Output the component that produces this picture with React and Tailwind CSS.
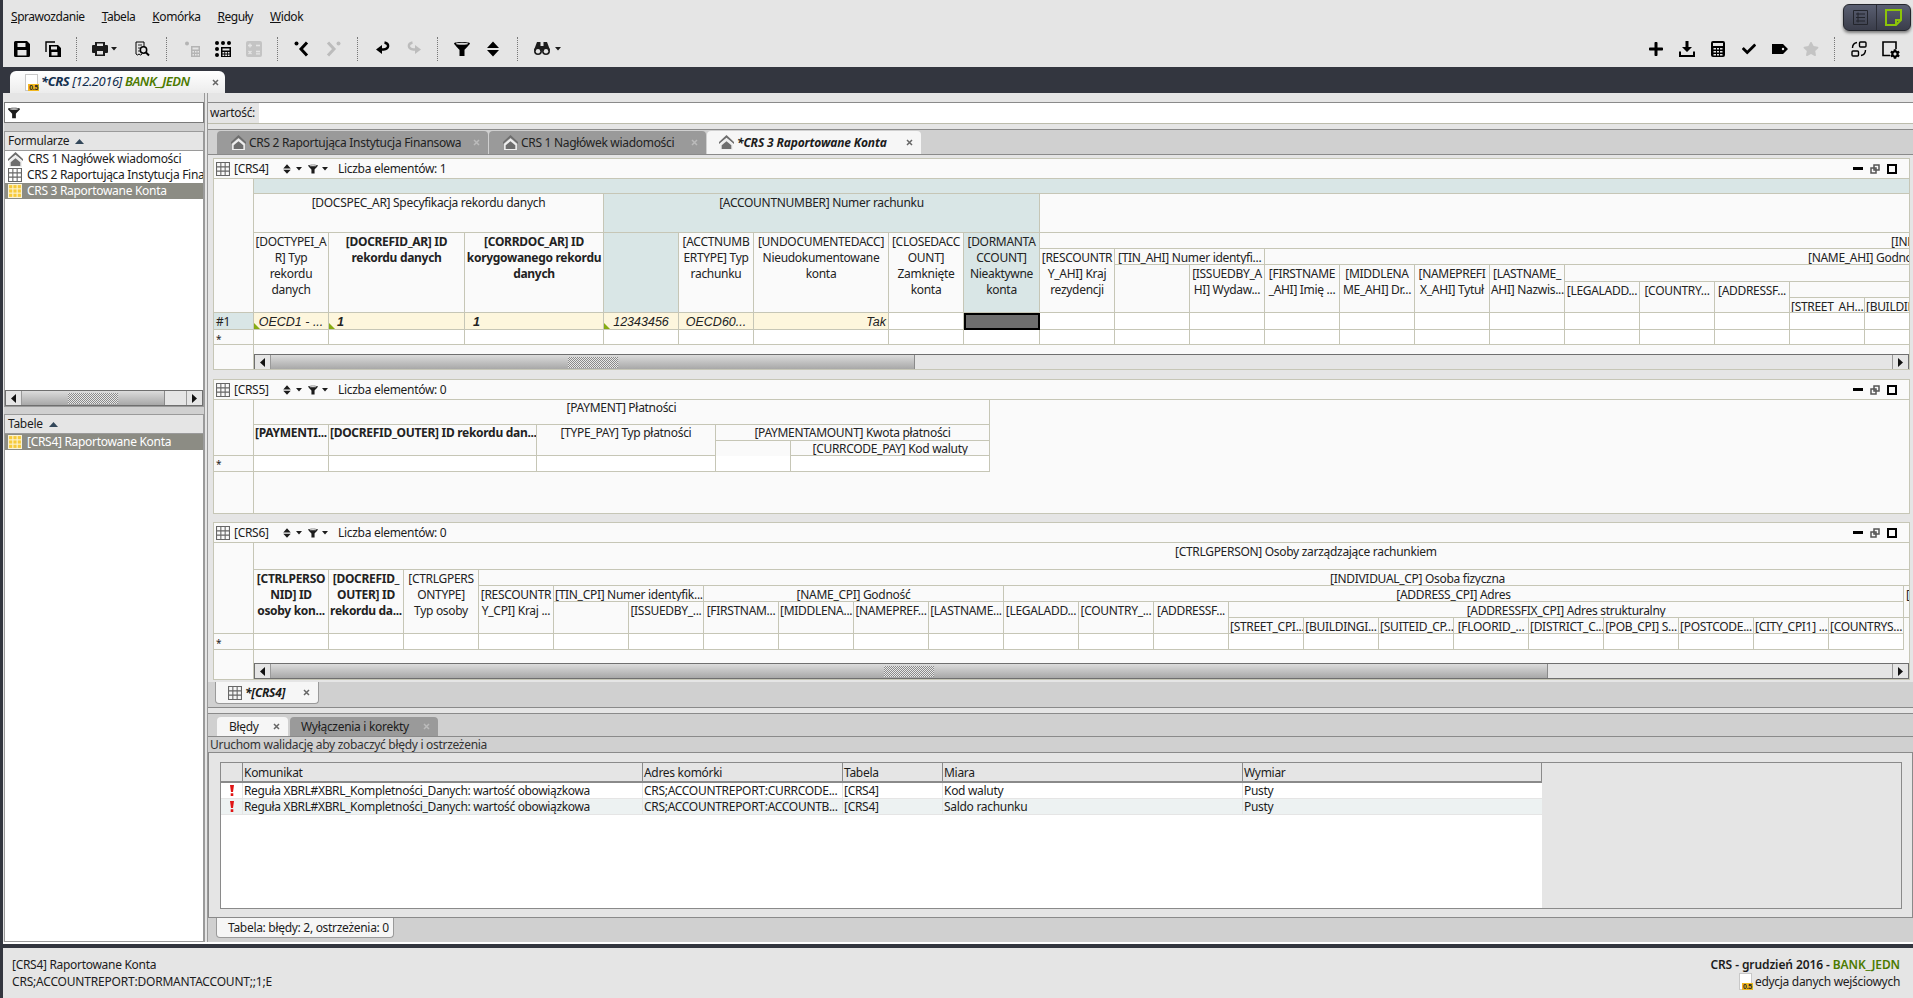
import React from 'react';
import clsx from 'clsx';
import { FaCheck, FaCog, FaPlus, FaStar } from 'react-icons/fa';

const line = 'border-[#c6c6b6]';
const dataFont = "font-['Liberation_Sans',sans-serif] text-[12.5px] tracking-normal italic";

// toolbar drawings
const Save = ({ className }) => (
    <svg viewBox="0 0 16 16" className={clsx('h-4 w-4', className)}>
        <path fill="currentColor" fillRule="evenodd" d="M0 1.5A1.5 1.5 0 0 1 1.5 0H13l3 3v11.5a1.5 1.5 0 0 1-1.5 1.5h-13A1.5 1.5 0 0 1 0 14.5zM3.5 2v4h8V2zM3.5 9v5.500h9V9z" />
    </svg>
);
const SaveAll = () => (
    <svg viewBox="0 0 16 16" className="h-4 w-4">
        <path fill="none" stroke="currentColor" strokeWidth="1.4" d="M10 1H1v10" />
        <path fill="currentColor" fillRule="evenodd" d="M4 4h9l3 3v9H4zM6 5.500v3h6v-3zM6.500 11v3.500h6V11z" />
    </svg>
);
const Print = () => (
    <svg viewBox="0 0 16 16" className="h-4 w-4">
        <path fill="currentColor" fillRule="evenodd" d="M3 1h10v3h2a1 1 0 0 1 1 1v6a1 1 0 0 1-1 1h-2v3H3v-3H1a1 1 0 0 1-1-1V5a1 1 0 0 1 1-1h2zM5 2.500V5h6V2.500zM5 10v3.500h6V10z" />
    </svg>
);
const Preview = () => (
    <svg viewBox="0 0 16 16" className="h-4 w-4" fill="none" stroke="currentColor">
        <path d="M2 1h8v5M2 1v12l1.500 1 1.500-1 1.500 1 1.500-1" />
        <path d="M4 4h4M4 7h2M4 10h2" strokeWidth=".8" />
        <circle cx="9.500" cy="9" r="3.200" strokeWidth="1.500" />
        <path d="m12 11.500 3 3" strokeWidth="2" />
    </svg>
);
const CalcGray = () => (
    <svg viewBox="0 0 16 16" className="h-4 w-4 text-[#b4b4b4]">
        <circle cx="3" cy="2.500" r="2" fill="currentColor" />
        <path fill="currentColor" fillRule="evenodd" d="M7 5h9v11H7zM8.500 6.500v2h6v-2zM8.500 10v1.500h1.500V10zM11 10v1.500h1.500V10zM13.500 10v1.500H15V10zM8.500 13v1.500h1.500V13zM11 13v1.500h1.500V13zM13.500 13v1.500H15V13z" />
    </svg>
);
const CalcDots = () => (
    <svg viewBox="0 0 16 16" className="h-4 w-4">
        <g fill="currentColor">
            <circle cx="2" cy="2" r="2" />
            <circle cx="8" cy="2" r="2" />
            <circle cx="14" cy="2" r="2" />
            <circle cx="2" cy="8" r="2" />
            <circle cx="2" cy="14" r="2" />
            <path fillRule="evenodd" d="M6 6h10v10H6zM7.500 7.500v2h7v-2zM7.500 11v1.500h1.800V11zM10.200 11v1.500H12V11zM12.800 11v1.500h1.700V11zM7.500 13.500V15h1.800v-1.500zM10.200 13.500V15H12v-1.500zM12.800 13.500V15h1.700v-1.500z" />
        </g>
    </svg>
);
const CalcMinus = () => (
    <svg viewBox="0 0 16 16" className="h-4 w-4">
        <rect width="16" height="16" rx="2" fill="#c4c4c4" />
        <path stroke="#e5e5e5" strokeWidth="1.300" d="M2 4.500h4M4 2.500v4M10 4.500h4M2.500 10l3 3M5.500 10l-3 3M10 10.500h4M10 12.800h4" />
    </svg>
);
const Back = ({ className }) => (
    <svg viewBox="0 0 16 16" className={clsx('h-4 w-4', className)}>
        <circle cx="2.500" cy="2.500" r="2" fill="currentColor" />
        <path fill="none" stroke="currentColor" strokeWidth="3" d="M13 1.500 7 8l6 6.500" />
    </svg>
);
const Undo = ({ className }) => (
    <svg viewBox="0 0 16 16" className={clsx('h-4 w-4', className)}>
        <path fill="none" stroke="currentColor" strokeWidth="2.400" d="M9.500 1.500c5 1 5 6.500-1 7H5" />
        <path fill="currentColor" d="M1 8.500 7 4v9z" />
    </svg>
);
const Funnel = ({ className = 'h-4 w-4' }) => (
    <svg viewBox="0 0 16 16" className={className}>
        <path fill="currentColor" d="M0 2.500C0 .500 16 .500 16 2.500c0 1-5.500 6-5.500 6.500v6h-5V9C5.500 8.500 0 3.500 0 2.500z" />
        <ellipse cx="8" cy="2.700" rx="6" ry="1" fill="#d8d8d8" />
    </svg>
);
const UpDown = ({ className = 'h-4 w-4' }) => (
    <svg viewBox="0 0 16 16" className={className}>
        <path fill="currentColor" d="M8 0.500 14 7H2zM2 9h12l-6 6.500z" />
    </svg>
);
const Caret = () => (
    <svg viewBox="0 0 6 4" className="h-1 w-1.5">
        <path fill="currentColor" d="M0 0h6L3 3.500z" />
    </svg>
);
const Binoculars = () => (
    <svg viewBox="0 0 16 13" className="h-[13px] w-4 shrink-0">
        <path fill="currentColor" d="M3 0h3.500v4h3V0H13l3 8H0z" />
        <circle cx="4" cy="9" r="4" fill="currentColor" />
        <circle cx="12" cy="9" r="4" fill="currentColor" />
        <circle cx="4" cy="9.300" r="2.200" fill="#e5e5e5" />
        <circle cx="12" cy="9.300" r="2.200" fill="#e5e5e5" />
    </svg>
);
const Download = () => (
    <svg viewBox="0 0 16 16" className="h-4 w-4">
        <path fill="currentColor" d="M6.500 0h3v6H13L8 11 3 6h3.500z" />
        <path fill="none" stroke="currentColor" strokeWidth="2" d="M1 10.500V15h14v-4.500" />
    </svg>
);
const Calc = () => (
    <svg viewBox="0 0 14 16" className="h-4 w-3.5">
        <path fill="currentColor" fillRule="evenodd" d="M2 0h10a2 2 0 0 1 2 2v12a2 2 0 0 1-2 2H2a2 2 0 0 1-2-2V2a2 2 0 0 1 2-2zM2 2v3h10V2zM2.500 7v1.500h2.500V7zM6 7v1.500h2V7zM9 7v1.500h2.500V7zM2.500 10v1.500h2.500V10zM6 10v1.500h2V10zM9 10v1.500h2.500V10zM2.500 13v1.500h2.500V13zM6 13v1.500h2V13zM9 13v1.500h2.500V13z" />
    </svg>
);
const Tag = () => (
    <svg viewBox="0 0 16 10" className="h-2.5 w-4">
        <path fill="currentColor" fillRule="evenodd" d="M0 0h11l5 5-5 5H0zM11 3.800a1.200 1.200 0 1 0 0 2.400 1.200 1.200 0 0 0 0-2.400z" />
    </svg>
);
const Sync = () => (
    <svg viewBox="0 0 16 16" className="h-4 w-4" fill="none" stroke="currentColor" strokeWidth="1.400">
        <rect x="8.500" y="1" width="6.500" height="5" rx="1" />
        <rect x="1" y="10" width="6.500" height="5" rx="1" />
        <path d="M1.500 7C1.500 4 3 2 6 1.500M14.500 9c0 3-1.500 5-4.500 5.500" />
    </svg>
);
const DocGear = () => (
    <span className="relative block h-4 w-4">
        <svg viewBox="0 0 16 16" className="h-4 w-4" fill="none" stroke="currentColor" strokeWidth="1.600">
            <path d="M8 14.500H1V1h13v7" />
        </svg>
        <FaCog className="absolute -bottom-0.5 -right-0.5 h-2.5 w-2.5" />
    </span>
);

// list / tab icons
const HomeIcon = () => (
    <svg viewBox="0 0 14 14" className="h-[15px] w-[15px] shrink-0">
        <path fill="#6e6e6e" d="M7 0 14 6.500v2L7 2.500 0 8.500v-2z" />
        <path fill="#eeeeee" d="M7 3 13 8.200V14H1V8.200z" />
        <path fill="#6e6e6e" d="M2.500 13V9.500L7 5.800l4.500 3.700V13z" />
    </svg>
);
const GridIcon = () => (
    <svg viewBox="0 0 13 13" className="h-3.5 w-3.5 shrink-0" fill="none" stroke="#666">
        <path d="M.5.500h12v12H.500zM4.500.500v12M8.500.500v12M.500 4.500h12M.500 8.500h12" />
    </svg>
);
const YellowGrid = () => (
    <svg viewBox="0 0 13 13" className="h-3.5 w-3.5 shrink-0" fill="#f7ca3a">
        <rect width="13" height="13" fill="#fbf3d4" />
        <rect x="1" y="1" width="3" height="3" />
        <rect x="5" y="1" width="3" height="3" />
        <rect x="9" y="1" width="3" height="3" />
        <rect x="1" y="5" width="3" height="3" />
        <rect x="5" y="5" width="3" height="3" />
        <rect x="9" y="5" width="3" height="3" />
        <rect x="1" y="9" width="3" height="3" />
        <rect x="5" y="9" width="3" height="3" />
        <rect x="9" y="9" width="3" height="3" />
    </svg>
);
const DocBadge = () => (
    <span className="relative block h-[17px] w-[13px] shrink-0 border border-[#c8c8c8] bg-white">
        <span className="absolute -right-0.5 -bottom-px bg-[#f2b81f] px-px font-['Liberation_Sans',sans-serif] text-[7px] leading-[7px] font-bold text-[#222]">0.5</span>
    </span>
);
const Close = ({ className }) => (
    <svg viewBox="0 0 7 7" className={clsx('h-[7px] w-[7px] shrink-0', className)}>
        <path stroke="currentColor" strokeWidth="1.500" d="m1 1 5 5M6 1 1 6" />
    </svg>
);
const SortUp = () => (
    <svg viewBox="0 0 9 5" className="h-[5px] w-[9px]">
        <path fill="#33475a" d="M4.500 0 9 5H0z" />
    </svg>
);

const Sep = ({ className = 'mx-2' }) => <div className={clsx('h-6 w-px border-l border-dotted border-[#777]', className)} />;

const Tool = ({ children }) => (
    <div className="flex h-6 w-[31px] items-center justify-center text-black">{children}</div>
);

const Toolbar = () => (
    <div className="flex h-[37px] shrink-0 items-center pl-[3px]">
        <Tool><Save /></Tool>
        <Tool><SaveAll /></Tool>
        <Sep />
        <div className="flex w-[41px] items-center gap-[3px] pl-[7px]"><Print /><Caret /></div>
        <Tool><Preview /></Tool>
        <Sep className="mx-[9px]" />
        <Tool><CalcGray /></Tool>
        <Tool><CalcDots /></Tool>
        <Tool><CalcMinus /></Tool>
        <Sep />
        <Tool><Back /></Tool>
        <Tool><Back className="-scale-x-100 text-[#bcbcbc]" /></Tool>
        <Sep className="mx-[9px]" />
        <Tool><Undo /></Tool>
        <Tool><Undo className="-scale-x-100 text-[#bcbcbc]" /></Tool>
        <Sep />
        <Tool><Funnel /></Tool>
        <Tool><UpDown /></Tool>
        <Sep className="mx-[9px]" />
        <div className="flex w-[41px] items-center gap-[5px] pl-[7px]"><Binoculars /><Caret /></div>
        <div className="ml-auto flex items-center pr-2">
            <Tool><FaPlus className="h-4 w-4" /></Tool>
            <Tool><Download /></Tool>
            <Tool><Calc /></Tool>
            <Tool><FaCheck className="h-3.5 w-4" /></Tool>
            <Tool><Tag /></Tool>
            <Tool><FaStar className="h-4 w-4 text-[#c4c4c4]" /></Tool>
            <Sep />
            <Tool><Sync /></Tool>
            <Tool><DocGear /></Tool>
        </div>
    </div>
);

const MenuBar = () => (
    <div className="flex h-[30px] shrink-0 items-start justify-between pr-0.5">
        <div className="flex h-full items-center gap-[17px] pl-2 pt-1 tracking-[-0.45px] text-[#111]">
            <span><u>S</u>prawozdanie</span>
            <span><u>T</u>abela</span>
            <span><u>K</u>omórka</span>
            <span><u>R</u>eguły</span>
            <span><u>W</u>idok</span>
        </div>
        <div className="mt-1 flex h-[27px] w-[68px] rounded-md border border-[#23252c] bg-gradient-to-b from-[#5a5f72] to-[#3a3d4a] shadow-[0_2px_3px_rgba(0,0,0,0.45)]">
            <div className="flex flex-1 items-center justify-center border-r border-[#2b2d36]">
                <svg viewBox="0 0 15 15" className="h-[15px] w-[15px]" fill="none" stroke="#23252c">
                    <path d="M.5.500h14v14H.500zM3 4h9M3 7.500h9M3 11h9M5 2.500v10" />
                </svg>
            </div>
            <div className="flex w-[33px] items-center justify-center">
                <svg viewBox="0 0 17 17" className="h-[17px] w-[17px]" fill="none" stroke="#8cc408" strokeWidth="2">
                    <path d="M1 1h15v10l-5 5H1zM16 11h-5v5" />
                </svg>
            </div>
        </div>
    </div>
);

const Cell = ({ className, children }) => (
    <div className={clsx('relative overflow-hidden whitespace-nowrap border-r border-b px-px text-center leading-4', line, className)}>
        {children}
    </div>
);

const Corner = () => (
    <span className="absolute bottom-0 left-0 h-0 w-0 border-r-[6px] border-b-[6px] border-r-transparent border-b-[#86ab12]" />
);

const ScrollBar = ({ thumb, grip, className }) => (
    <div className={clsx('flex items-stretch border border-[#6f6f6f] bg-[#e5e5e5]', className)}>
        <div className="flex w-4 items-center justify-center border-r border-[#9a9a9a] bg-[#e5e5e5]">
            <svg viewBox="0 0 5 9" className="h-[9px] w-[5px]"><path d="M5 0v9L0 4.500z" fill="#111" /></svg>
        </div>
        <div className={clsx('flex items-center justify-center border-r border-[#8a8a8a] bg-gradient-to-b from-[#dcdcdc] to-[#a8a8a8]', thumb)}>
            <div className={clsx('h-[11px] bg-[repeating-conic-gradient(#8a8a8a_0_25%,#e8e8e8_0_50%)] bg-[length:2px_2px]', grip)} />
        </div>
        <div className="flex-1" />
        <div className="flex w-4 items-center justify-center border-l border-[#9a9a9a] bg-[#e5e5e5]">
            <svg viewBox="0 0 5 9" className="h-[9px] w-[5px]"><path d="M0 0v9l5-4.500z" fill="#111" /></svg>
        </div>
    </div>
);

const Panel = ({ title, count, className, children }) => (
    <div className={clsx('flex w-[1697px] shrink-0 flex-col overflow-hidden border bg-[#fafafa]', line, className)}>
        <div className={clsx('flex h-5 shrink-0 items-center border-b pl-[2px] pr-3', line)}>
            <GridIcon />
            <span className="ml-[4px] w-[48px]">{title}</span>
            <UpDown className="h-2.5 w-2.5" />
            <span className="ml-1 mr-[6px]"><Caret /></span>
            <Funnel className="h-2.5 w-2.5" />
            <span className="ml-1 mr-[10px]"><Caret /></span>
            <span>Liczba elementów: {count}</span>
            <div className="ml-auto flex items-center gap-[7px]">
                <div className="h-[3px] w-[10px] bg-black" />
                <svg viewBox="0 0 10 10" className="h-[10px] w-[10px]" fill="none" stroke="#555" strokeWidth="1.500">
                    <path d="M4 1h5v5H4zM1 4h5v5H1z" />
                </svg>
                <div className="h-[10px] w-[10px] border-2 border-black" />
            </div>
        </div>
        {children}
    </div>
);

const Crs4Table = () => (
    <div className="grid shrink-0 grid-cols-[40px_75px_136px_139px_75px_75px_135px_75px_76px_repeat(12,75px)] grid-rows-[15px_39px_16px_16px_17px_16px_15px_17px_15px] text-[#222] [&>div]:pt-px">
        <Cell className="col-[1] row-[1/8] bg-[#fafafa]" />
        <Cell className="col-[2/22] row-[1] bg-[#d9e6e6]" />
        <Cell className="col-[2/5] row-[2]">[DOCSPEC_AR] Specyfikacja rekordu danych</Cell>
        <Cell className="col-[5/10] row-[2] bg-[#d9e6e6]">[ACCOUNTNUMBER] Numer rachunku</Cell>
        <Cell className="col-[10/22] row-[2]" />
        <Cell className="col-[2] row-[3/8]">[DOCTYPEI_A<br />R] Typ<br />rekordu<br />danych</Cell>
        <Cell className="col-[3] row-[3/8] font-bold">[DOCREFID_AR] ID<br />rekordu danych</Cell>
        <Cell className="col-[4] row-[3/8] font-bold">[CORRDOC_AR] ID<br />korygowanego rekordu<br />danych</Cell>
        <Cell className="col-[5] row-[3/8] bg-[#d9e6e6]" />
        <Cell className="col-[6] row-[3/8]">[ACCTNUMB<br />ERTYPE] Typ<br />rachunku</Cell>
        <Cell className="col-[7] row-[3/8]">[UNDOCUMENTEDACC]<br />Nieudokumentowane<br />konta</Cell>
        <Cell className="col-[8] row-[3/8]">[CLOSEDACC<br />OUNT]<br />Zamknięte<br />konta</Cell>
        <Cell className="col-[9] row-[3/8] bg-[#d9e6e6]">[DORMANTA<br />CCOUNT]<br />Nieaktywne<br />konta</Cell>
        <Cell className="col-[10/22] row-[3] pl-[851px] text-left">[INDIVIDUAL_AHI] Osoba fizyczna</Cell>
        <Cell className="col-[10] row-[4/8]">[RESCOUNTR<br />Y_AHI] Kraj<br />rezydencji</Cell>
        <Cell className="col-[11/13] row-[4] pl-[3px] text-left">[TIN_AHI] Numer identyfi...</Cell>
        <Cell className="col-[13/22] row-[4] pl-[543px] text-left">[NAME_AHI] Godność</Cell>
        <Cell className="col-[11] row-[5/8]" />
        <Cell className="col-[12] row-[5/8]">[ISSUEDBY_A<br />HI] Wydaw...</Cell>
        <Cell className="col-[13] row-[5/8]">[FIRSTNAME<br />_AHI] Imię ...</Cell>
        <Cell className="col-[14] row-[5/8]">[MIDDLENA<br />ME_AHI] Dr...</Cell>
        <Cell className="col-[15] row-[5/8]">[NAMEPREFI<br />X_AHI] Tytuł</Cell>
        <Cell className="col-[16] row-[5/8]">[LASTNAME_<br />AHI] Nazwis...</Cell>
        <Cell className="col-[17/22] row-[5]" />
        <Cell className="col-[17] row-[6/8]">[LEGALADD...</Cell>
        <Cell className="col-[18] row-[6/8]">[COUNTRY...</Cell>
        <Cell className="col-[19] row-[6/8]">[ADDRESSF...</Cell>
        <Cell className="col-[20/22] row-[6]" />
        <Cell className="col-[20] row-[7]">[STREET_AH...</Cell>
        <Cell className="col-[21] row-[7] text-left">[BUILDING...</Cell>

        <Cell className="col-[1] row-[8] bg-[#d9e6e6] pl-0.5 text-left">#1</Cell>
        <Cell className={clsx('col-[2] row-[8] bg-[#fdf6dd]', dataFont)}><Corner />OECD1 - ...</Cell>
        <Cell className={clsx('col-[3] row-[8] bg-[#fdf6dd] pl-2 text-left font-bold', dataFont)}><Corner />1</Cell>
        <Cell className={clsx('col-[4] row-[8] bg-[#fdf6dd] pl-2 text-left font-bold', dataFont)}>1</Cell>
        <Cell className={clsx('col-[5] row-[8] bg-[#fdf6dd]', dataFont)}><Corner />12343456</Cell>
        <Cell className={clsx('col-[6] row-[8] bg-[#fdf6dd]', dataFont)}>OECD60...</Cell>
        <Cell className={clsx('col-[7] row-[8] bg-[#fdf6dd] pr-0.5 text-right', dataFont)}>Tak</Cell>
        <Cell className="col-[8] row-[8] bg-white" />
        <div className="col-[9] row-[8] border-2 border-black bg-[#6e6e6e]" />
        {[10, 11, 12, 13, 14, 15, 16, 17, 18, 19, 20, 21].map((n) => (
            <Cell key={n} className={clsx('row-[8] bg-white', colClass[n])} />
        ))}
        <Cell className="col-[1] row-[9] pl-0.5 text-left text-[10px]">*</Cell>
        {[2, 3, 4, 5, 6, 7, 8, 9, 10, 11, 12, 13, 14, 15, 16, 17, 18, 19, 20, 21].map((n) => (
            <Cell key={n} className={clsx('row-[9] bg-white', colClass[n])} />
        ))}
    </div>
);

// full names so the stylesheet builder finds them
const colClass = {
    2: 'col-[2]', 3: 'col-[3]', 4: 'col-[4]', 5: 'col-[5]', 6: 'col-[6]', 7: 'col-[7]', 8: 'col-[8]',
    9: 'col-[9]', 10: 'col-[10]', 11: 'col-[11]', 12: 'col-[12]', 13: 'col-[13]', 14: 'col-[14]',
    15: 'col-[15]', 16: 'col-[16]', 17: 'col-[17]', 18: 'col-[18]', 19: 'col-[19]', 20: 'col-[20]',
    21: 'col-[21]', 22: 'col-[22]', 23: 'col-[23]',
};

const Crs5Table = () => (
    <div className="grid shrink-0 grid-cols-[40px_75px_208px_179px_75px_199px] grid-rows-[25px_16px_15px_16px] text-[#222]">
        <Cell className="col-[1] row-[1/4]" />
        <Cell className="col-[2/7] row-[1]">[PAYMENT] Płatności</Cell>
        <Cell className="col-[2] row-[2/4] font-bold">[PAYMENTI...</Cell>
        <Cell className="col-[3] row-[2/4] font-bold">[DOCREFID_OUTER] ID rekordu dan...</Cell>
        <Cell className="col-[4] row-[2/4]">[TYPE_PAY] Typ płatności</Cell>
        <Cell className="col-[5/7] row-[2]">[PAYMENTAMOUNT] Kwota płatności</Cell>
        <div className={clsx('col-[5] row-[3] border-r', line)} />
        <Cell className="col-[6] row-[3]">[CURRCODE_PAY] Kod waluty</Cell>
        <Cell className="col-[1] row-[4] bg-[#fafafa] pl-0.5 text-left text-[10px]">*</Cell>
        {[2, 3, 4, 5, 6].map((n) => (
            <Cell key={n} className={clsx('row-[4] bg-white', colClass[n])} />
        ))}
    </div>
);

const Crs6Table = () => (
    <div className="grid shrink-0 grid-cols-[40px_repeat(23,75px)] grid-rows-[27px_16px_16px_16px_16px_16px] text-[#222] [&>div]:pt-px">
        <Cell className="col-[1] row-[1/6]" />
        <Cell className="col-[2/25] row-[1] pl-[921px] text-left">[CTRLGPERSON] Osoby zarządzające rachunkiem</Cell>
        <Cell className="col-[2] row-[2/6] font-bold">[CTRLPERSO<br />NID] ID<br />osoby kon...</Cell>
        <Cell className="col-[3] row-[2/6] font-bold">[DOCREFID_<br />OUTER] ID<br />rekordu da...</Cell>
        <Cell className="col-[4] row-[2/6]">[CTRLGPERS<br />ONTYPE]<br />Typ osoby</Cell>
        <Cell className="col-[5/25] row-[2] pl-[851px] text-left">[INDIVIDUAL_CP] Osoba fizyczna</Cell>
        <Cell className="col-[5] row-[3/6]">[RESCOUNTR<br />Y_CPI] Kraj ...</Cell>
        <Cell className="col-[6/8] row-[3] text-left">[TIN_CPI] Numer identyfik...</Cell>
        <Cell className="col-[8/12] row-[3]">[NAME_CPI] Godność</Cell>
        <Cell className="col-[12/24] row-[3]">[ADDRESS_CPI] Adres</Cell>
        <Cell className="col-[24] row-[3/5] pl-0.5 text-left">[</Cell>
        <Cell className="col-[6] row-[4/6]" />
        <Cell className="col-[7] row-[4/6]">[ISSUEDBY_...</Cell>
        <Cell className="col-[8] row-[4/6]">[FIRSTNAM...</Cell>
        <Cell className="col-[9] row-[4/6]">[MIDDLENA...</Cell>
        <Cell className="col-[10] row-[4/6]">[NAMEPREF...</Cell>
        <Cell className="col-[11] row-[4/6]">[LASTNAME...</Cell>
        <Cell className="col-[12] row-[4/6]">[LEGALADD...</Cell>
        <Cell className="col-[13] row-[4/6]">[COUNTRY_...</Cell>
        <Cell className="col-[14] row-[4/6]">[ADDRESSF...</Cell>
        <Cell className="col-[15/24] row-[4]">[ADDRESSFIX_CPI] Adres strukturalny</Cell>
        <Cell className="col-[15] row-[5]">[STREET_CPI...</Cell>
        <Cell className="col-[16] row-[5]">[BUILDINGI...</Cell>
        <Cell className="col-[17] row-[5]">[SUITEID_CP...</Cell>
        <Cell className="col-[18] row-[5]">[FLOORID_...</Cell>
        <Cell className="col-[19] row-[5]">[DISTRICT_C...</Cell>
        <Cell className="col-[20] row-[5]">[POB_CPI] S...</Cell>
        <Cell className="col-[21] row-[5]">[POSTCODE...</Cell>
        <Cell className="col-[22] row-[5]">[CITY_CPI1] ...</Cell>
        <Cell className="col-[23] row-[5]">[COUNTRYS...</Cell>
        <Cell className="col-[1] row-[6] bg-[#fafafa] pl-0.5 text-left text-[10px]">*</Cell>
        {[2, 3, 4, 5, 6, 7, 8, 9, 10, 11, 12, 13, 14, 15, 16, 17, 18, 19, 20, 21, 22, 23].map((n) => (
            <Cell key={n} className={clsx('row-[6] bg-white', colClass[n])} />
        ))}
    </div>
);

const Frozen = ({ className, children }) => (
    <div className={clsx('flex', className)}>
        <div className={clsx('w-10 shrink-0 border-r', line)} />
        {children}
    </div>
);

const Sidebar = () => (
    <div className="flex h-[849px] w-[201px] shrink-0 flex-col pl-px">
        <div className="mt-[9px] flex h-[21px] shrink-0 items-center border border-[#7a7a7a] bg-white pl-[3px]">
            <Funnel className="h-3 w-3" />
        </div>
        <div className="h-[8px] shrink-0 bg-[#d0d0d0]" />
        <div className="flex h-[276px] shrink-0 flex-col border border-[#9a9a9a] bg-white">
            <div className="flex h-[19px] shrink-0 items-center gap-1.5 border-b border-[#9a9a9a] bg-[#e5e5e5] pl-[3px]">Formularze <SortUp /></div>
            <div className="flex h-4 items-center gap-[5px] pl-[3px] leading-4"><HomeIcon />CRS 1 Nagłówek wiadomości</div>
            <div className="flex h-4 items-center gap-[5px] overflow-hidden pl-[3px] whitespace-nowrap leading-4"><GridIcon />CRS 2 Raportująca Instytucja Finansowa</div>
            <div className="flex h-4 items-center gap-[5px] bg-[#8c8c84] pl-[3px] leading-4 text-white"><YellowGrid />CRS 3 Raportowane Konta</div>
            <div className="flex-1" />
            <ScrollBar thumb="w-[143px]" grip="w-[50px]" className="h-4 shrink-0" />
        </div>
        <div className="h-[7px] shrink-0 bg-[#d0d0d0]" />
        <div className="flex flex-1 flex-col border border-[#9a9a9a] bg-white">
            <div className="flex h-[19px] items-center gap-1.5 border-b border-[#9a9a9a] bg-[#e5e5e5] pl-[3px]">Tabele <SortUp /></div>
            <div className="flex h-4 items-center gap-[5px] bg-[#8c8c84] pl-[3px] leading-4 text-white"><YellowGrid />[CRS4] Raportowane Konta</div>
        </div>
    </div>
);

const tabClass = 'flex items-center rounded-t-sm whitespace-nowrap';

const Main = () => (
    <div className="flex h-[849px] w-[1705px] flex-col">
        <div className="mt-[9px] flex h-[22px] shrink-0 items-center border-y border-[#8a8a8a] border-b-[#bcbcac]">
            <span className="w-[51px] pl-0.5">wartość:</span>
            <div className="h-full flex-1 bg-white" />
        </div>
        <div className="mt-[5px] flex h-[553px] shrink-0 flex-col border-t border-[#8a8a8a]">
            <div className="flex h-[25px] shrink-0 gap-px border-b border-[#8a8a8a] bg-[#d0d0d0] pl-[9px] pt-px">
                <div className={clsx(tabClass, 'w-[271px] gap-[3px] bg-[#9a9a9a] pl-[14px] text-[#222]')}>
                    <HomeIcon />
                    <span>CRS 2 Raportująca Instytucja Finansowa</span>
                    <Close className="ml-auto mr-2 text-[#bbb]" />
                </div>
                <div className={clsx(tabClass, 'w-[217px] gap-[3px] bg-[#9a9a9a] pl-[14px] text-[#222]')}>
                    <HomeIcon />
                    <span>CRS 1 Nagłówek wiadomości</span>
                    <Close className="ml-auto mr-2 text-[#bbb]" />
                </div>
                <div className={clsx(tabClass, 'w-[214px] gap-[3px] bg-[#f6f6f6] pl-3')}>
                    <HomeIcon />
                    <span className="font-bold tracking-[-0.15px] italic">*CRS 3 Raportowane Konta</span>
                    <Close className="ml-auto mr-2 text-[#666]" />
                </div>
            </div>
            <div className="flex flex-1 flex-col bg-[#e5e5e5] pl-[5px] pt-[3px]">
                <Panel title="[CRS4]" count={1} className="h-[212px]">
                    <Crs4Table />
                    <Frozen className="h-[9px] shrink-0" />
                    <Frozen className="flex-1">
                        <ScrollBar thumb="w-[644px]" grip="w-[50px]" className="h-4 w-[1655px]" />
                    </Frozen>
                </Panel>
                <div className="h-[9px] shrink-0" />
                <Panel title="[CRS5]" count={0} className="h-[135px]">
                    <Crs5Table />
                    <Frozen className="flex-1" />
                </Panel>
                <div className="h-[8px] shrink-0" />
                <Panel title="[CRS6]" count={0} className="h-[158px]">
                    <Crs6Table />
                    <Frozen className="h-[13px] shrink-0" />
                    <Frozen className="flex-1">
                        <ScrollBar thumb="w-[1277px]" grip="w-[50px]" className="h-4 w-[1655px]" />
                    </Frozen>
                </Panel>
            </div>
        </div>
        <div className="flex h-[26px] shrink-0 border-b border-[#8a8a8a] bg-[#d0d0d0] pl-[7px]">
            <div className="flex h-[22px] w-[104px] items-center gap-[3px] rounded-b-sm border border-t-0 border-[#9a9a9a] bg-[#f6f6f6] pl-3">
                <GridIcon />
                <span className="font-bold italic">*[CRS4]</span>
                <Close className="ml-auto mr-2 text-[#666]" />
            </div>
        </div>
        <div className="h-[5px] shrink-0" />
        <div className="flex h-[23px] shrink-0 items-end gap-0.5 border-t border-[#8a8a8a] bg-[#d0d0d0] pl-[9px]">
            <div className={clsx(tabClass, 'h-[19px] w-[71px] bg-[#f6f6f6] pl-3')}>Błędy<Close className="ml-auto mr-2 text-[#666]" /></div>
            <div className={clsx(tabClass, 'h-[19px] w-[148px] bg-[#9a9a9a] pl-[11px]')}>Wyłączenia i korekty<Close className="ml-auto mr-2 text-[#bbb]" /></div>
        </div>
        <div className="flex h-4 shrink-0 items-center border-t border-[#8a8a8a] bg-[#d0d0d0] pl-0.5 text-[#333]">Uruchom walidację aby zobaczyć błędy i ostrzeżenia</div>
        <div className="flex h-[166px] shrink-0 flex-col border border-[#8a8a8a] bg-[#e5e5e5] pl-[11px] pr-[10px] pt-[9px]">
            <div className="flex h-[147px] border border-[#8a8a8a]">
                <div className="flex w-[1321px] flex-col bg-white">
                    <div className="grid h-5 grid-cols-[21px_400px_200px_100px_300px_300px] items-stretch border-b-2 border-[#8a8a8a] bg-[#e5e5e5] leading-[19px]">
                        <div />
                        <div className="border-l border-[#8a8a8a] pl-px">Komunikat</div>
                        <div className="border-l border-[#8a8a8a] pl-px">Adres komórki</div>
                        <div className="border-l border-[#8a8a8a] pl-px">Tabela</div>
                        <div className="border-l border-[#8a8a8a] pl-px">Miara</div>
                        <div className="border-x border-[#8a8a8a] pl-px">Wymiar</div>
                    </div>
                    {[
                        ['CRS;ACCOUNTREPORT:CURRCODE...', 'Kod waluty', 'bg-white'],
                        ['CRS;ACCOUNTREPORT:ACCOUNTB...', 'Saldo rachunku', 'bg-[#edf2f2]'],
                    ].map(([address, measure, bg]) => (
                        <div key={measure} className={clsx('grid h-4 grid-cols-[21px_400px_200px_100px_300px_300px] border-b border-[#e5e5e5] leading-[15px]', bg)}>
                            <div className="flex items-center justify-center">
                                <svg viewBox="0 0 4 11" className="h-[11px] w-1"><path fill="#e01515" d="M0 0h4L3 7H1zM.7 8.200h2.600V11H.700z" /></svg>
                            </div>
                            <div className="overflow-hidden border-l border-[#e5e5e5] pl-px tracking-[-0.36px] whitespace-nowrap">Reguła XBRL#XBRL_Kompletności_Danych: wartość obowiązkowa</div>
                            <div className="overflow-hidden border-l border-[#e5e5e5] pl-px whitespace-nowrap">{address}</div>
                            <div className="border-l border-[#e5e5e5] pl-px">[CRS4]</div>
                            <div className="border-l border-[#e5e5e5] pl-px">{measure}</div>
                            <div className="border-l border-[#e5e5e5] pl-px">Pusty</div>
                        </div>
                    ))}
                </div>
            </div>
        </div>
        <div className="flex h-6 shrink-0 bg-[#d0d0d0] pl-2">
            <div className="flex h-5 w-[178px] items-center rounded-b-sm border border-t-0 border-[#9a9a9a] bg-[#f6f6f6] pl-[11px]">Tabela: błędy: 2, ostrzeżenia: 0</div>
        </div>
    </div>
);

const App = () => (
    <div className="flex h-[998px] w-[1913px] flex-col overflow-hidden border-l-[3px] border-[#33363f] bg-[#e5e5e5] font-['Noto_Sans',sans-serif] text-[12px] tracking-[-0.3px] text-[#1c1c1c]">
        <MenuBar />
        <Toolbar />
        <div className="flex h-[26px] shrink-0 items-end bg-[#33363f] pl-[7px]">
            <div className="flex h-[22px] w-[215px] items-center gap-[3px] rounded-t-md bg-gradient-to-b from-white to-[#ececec] pl-[15px]">
                <DocBadge />
                <span className="text-[13px] tracking-[-0.45px] text-[#14304f] italic"><b>*CRS</b> [12.2016] <b className="font-semibold text-[#4c7a00]">BANK_JEDN</b></span>
                <Close className="ml-auto mr-[6px] text-[#666]" />
            </div>
        </div>
        <div className="flex shrink-0">
            <Sidebar />
            <div className="w-1 border-x border-[#9a9a9a]" />
            <Main />
        </div>
        <div className="h-0.5 shrink-0 bg-white" />
        <div className="h-1 shrink-0 bg-[#33363f]" />
        <div className="flex flex-1 items-start justify-between pl-[9px] pr-[13px] pt-[8px] leading-[17px]">
            <div>
                <div>[CRS4] Raportowane Konta</div>
                <div className="tracking-[-0.2px]">CRS;ACCOUNTREPORT:DORMANTACCOUNT;;1;E</div>
            </div>
            <div className="flex flex-col items-end">
                <div className="font-semibold tracking-[-0.1px]">CRS - grudzień 2016 - <span className="text-[#4c7a00]">BANK_JEDN</span></div>
                <div className="flex items-center gap-[3px]"><DocBadge />edycja danych wejściowych</div>
            </div>
        </div>
    </div>
);

export default App;
